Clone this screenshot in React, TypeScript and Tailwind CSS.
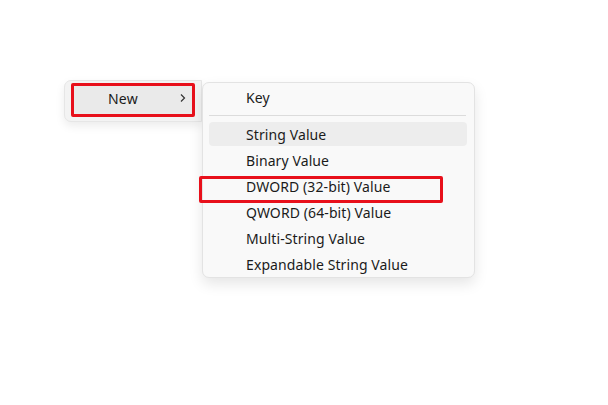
import React from 'react';

const items = [
  'String Value',
  'Binary Value',
  'DWORD (32-bit) Value',
  'QWORD (64-bit) Value',
  'Multi-String Value',
  'Expandable String Value',
];

function Chevron() {
  return (
    <svg width="8" height="10" viewBox="0 0 8 10" className="text-[#333]">
      <path d="M2 1.5 L5.5 5 L2 8.5" fill="none" stroke="currentColor" strokeWidth="1.2" />
    </svg>
  );
}

export default function App() {
  return (
    <div
      className="w-[608px] h-[405px] bg-white pt-[80px] pl-[64px] flex items-start"
      style={{ fontFamily: '"Noto Sans", "Open Sans", sans-serif' }}
    >
      <div className="w-[138px] h-[42px] bg-[#f3f3f3] border border-[#e6e6e6] rounded-l-[7px] shadow-[0_4px_10px_rgba(0,0,0,0.08)] pt-[2px] pl-[6px]">
        <div className="w-[124px] h-[34px] border-[3px] border-[#e8101b] rounded-[2px] bg-[#eaeaea] flex items-center pl-[34px] pr-[5px] pb-[4px] text-[14px] tracking-[0.2px] text-[#1b1b1b]">
          <span className="flex-1">New</span>
          <Chevron />
        </div>
      </div>

      <div className="relative w-[273px] bg-[#f9f9f9] border border-[#e3e3e3] rounded-[7px] shadow-[0_6px_14px_rgba(0,0,0,0.1)] pt-[2px] pb-[1px] text-[14px] tracking-[0.1px] text-[#1b1b1b] mt-[2px]">
        <div className="h-[24px] mb-[2px] mx-[6px] flex items-center pl-[37px]">Key</div>
        <div className="h-[11px] pt-[4px] mx-[6px] pr-[2px]">
          <div className="h-px w-full bg-[#dcdcdc]" />
        </div>
        {items.map((t, i) => (
          <div
            key={t}
            className={
              'h-[24px] ml-[6px] mr-[7px] rounded-[4px] flex items-center pl-[37px] ' +
              (i === 0 ? 'bg-[#ededed] ' : '') +
              (i < items.length - 1 ? 'mb-[2px]' : '')
            }
          >
            {t}
          </div>
        ))}
        <div className="absolute left-[-4px] top-[93px] w-[244px] h-[27px] border-[3px] border-[#e8101b] rounded-[2px]" />
      </div>
    </div>
  );
}
